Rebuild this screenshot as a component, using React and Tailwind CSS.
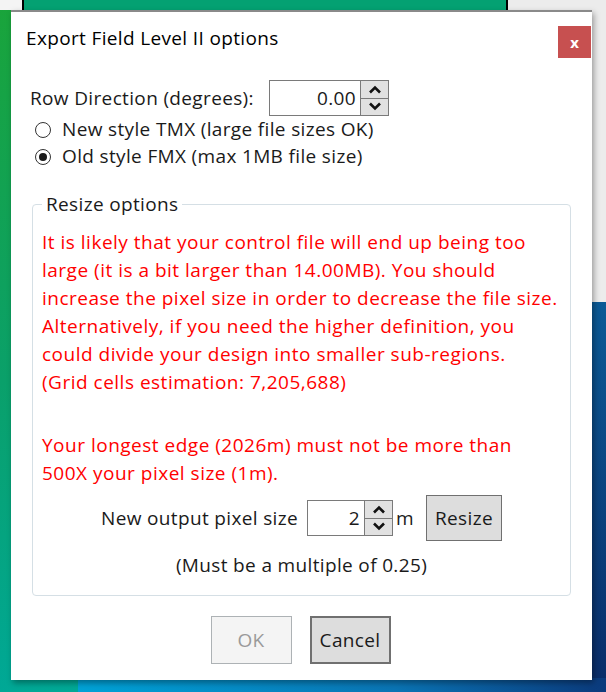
import React from 'react'

const font = { fontFamily: '"Open Sans", "Noto Sans", sans-serif' }

// Small up/down spinner glued to a numeric text box
const Spinner = ({ value, width }) => (
  <div className="flex h-[36px] border border-[#7a7a7a]">
    <div className={`${width} flex items-center justify-end pr-[4px] bg-white text-[#1a1a1a]`}>{value}</div>
    <div className="flex w-[28px] flex-col border-l border-[#7a7a7a]">
      <div className="flex flex-1 items-center justify-center bg-[#e1e1e1] border-b border-[#7a7a7a]">
        <svg width="14" height="9" viewBox="0 0 14 9"><path d="M2 7.5 L7 2.5 L12 7.5" fill="none" stroke="#111" strokeWidth="2.6" /></svg>
      </div>
      <div className="flex flex-1 items-center justify-center bg-[#e1e1e1]">
        <svg width="14" height="9" viewBox="0 0 14 9"><path d="M2 1.5 L7 6.5 L12 1.5" fill="none" stroke="#111" strokeWidth="2.6" /></svg>
      </div>
    </div>
  </div>
)

const Radio = ({ checked, label }) => (
  <div className="flex h-[27px] items-center gap-[11px]">
    <span className="ml-[5px] flex h-[16px] w-[16px] items-center justify-center rounded-full border border-[#333] bg-white">
      {checked && <span className="h-[8px] w-[8px] rounded-full bg-[#1a1a1a]"></span>}
    </span>
    <span>{label}</span>
  </div>
)

export default function App() {
  return (
    <div className="relative h-[692px] w-[606px] overflow-hidden bg-[linear-gradient(180deg,#1aa43a_0%,#0aa06a_55%,#00a896_100%)]" style={font}>
      {/* desktop bits showing behind the dialog */}
      <div className="absolute left-[22px] top-[-4px] h-[16px] w-[486px] border-x-2 border-black bg-[#04a172]"></div>
      <div className="absolute left-[508px] top-0 h-[302px] w-[98px] bg-[#ececec]"></div>
      <div className="absolute left-0 top-0 h-[10px] w-[22px] bg-[#f4f4f4]"></div>
      <div className="absolute left-[508px] top-[302px] h-[390px] w-[98px] bg-[linear-gradient(180deg,#0b5a96,#0a2c68)]"></div>
      <div className="absolute left-[78px] top-[678px] h-[14px] w-[528px] bg-[linear-gradient(90deg,#00a2d6,#0a74b4_60%,#0b3a7c)]"></div>

      <div className="relative pl-[11px] pt-[10px]">
        <div className="flex h-[670px] w-[581px] flex-col border-t-2 border-[#8a8a8a] bg-white text-[19px] leading-[27px] tracking-[0.35px] text-[#1a1a1a] shadow-[2px_3px_6px_rgba(0,0,0,0.35)]">
          {/* title bar */}
          <div className="flex h-[52px] items-start justify-between pl-[15px] pr-[1px] pt-[12px]">
            <span className="leading-[28px] text-black">Export Field Level II options</span>
            <div className="mt-[2px] flex h-[32px] w-[33px] items-center justify-center bg-[#c75050] text-[15px] font-bold tracking-normal text-white">x</div>
          </div>

          {/* options */}
          <div className="pl-[19px] pt-[16px]">
            <div className="flex items-center">
              <span className="w-[239px]">Row Direction (degrees):</span>
              <Spinner value="0.00" width="w-[90px]" />
            </div>
            <div>
              <Radio label="New style TMX (large file sizes OK)" />
              <Radio checked label="Old style FMX (max 1MB file size)" />
            </div>
          </div>

          {/* resize group */}
          <fieldset className="mx-[21px] mt-[22px] h-[404px] rounded-[4px] border border-[#d5dfe5] px-[9px]">
            <legend className="px-[4px] leading-[24px] text-[#1a1a1a]">Resize options</legend>
            <div className="mt-[12px] text-[#ff0000] leading-[28px] tracking-[0.5px]">
              <p>
                It is likely that your control file will end up being too<br />
                large (it is a bit larger than 14.00MB). You should<br />
                increase the pixel size in order to decrease the file size.<br />
                Alternatively, if you need the higher definition, you<br />
                could divide your design into smaller sub-regions.<br />
                (Grid cells estimation: 7,205,688)
              </p>
              <p className="mt-[35px]">
                Your longest edge (2026m) must not be more than<br />
                500X your pixel size (1m).
              </p>
            </div>
            <div className="mt-[8px] flex items-center justify-center gap-[9px]">
              <span>New output pixel size</span>
              <div className="flex items-center gap-[3px]">
                <Spinner value="2" width="w-[56px]" />
                <span>m</span>
              </div>
              <button className="ml-[3px] h-[46px] w-[76px] border border-[#707070] bg-[#dddddd] text-[#1a1a1a]">Resize</button>
            </div>
            <div className="mt-[11px] text-center">(Must be a multiple of 0.25)</div>
          </fieldset>

          {/* dialog buttons */}
          <div className="mt-[20px] flex justify-center gap-[18px] pr-[2px]">
            <button className="h-[48px] w-[81px] border border-[#adb2b5] bg-[#f4f4f4] text-[#9a9a9a]">OK</button>
            <button className="h-[48px] w-[81px] border-2 border-[#707070] bg-[#dddddd] text-[#1a1a1a]">Cancel</button>
          </div>
        </div>
      </div>
    </div>
  )
}
